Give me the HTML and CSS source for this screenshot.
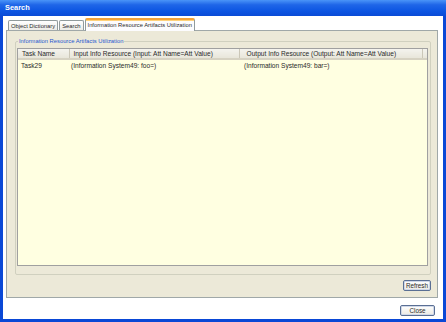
FILE: index.html
```html
<!DOCTYPE html>
<html lang="en">
<head>
  <meta charset="UTF-8">
  <title>Search</title>
  <link rel="stylesheet" href="styles.css">
</head>
<body>
  <!-- Title bar -->
  <div class="titlebar">Search</div>

  <!-- Client area -->
  <div class="client">
    <div class="tabs">
      <div class="tab">Object Dictionary</div>
      <div class="tab">Search</div>
      <div class="tab active">Information Resource Artifacts Utilization</div>
    </div>

    <div class="panel">
      <fieldset class="group">
        <legend>Information Resource Artifacts Utilization</legend>
        <div class="list">
          <table>
            <thead>
              <tr>
                <th class="col-task">Task Name</th>
                <th class="col-input">Input Info Resource (Input: Att Name=Att Value)</th>
                <th class="col-output">Output Info Resource (Output: Att Name=Att Value)</th>
                <th class="col-fill"></th>
              </tr>
            </thead>
            <tbody>
              <tr>
                <td>Task29</td>
                <td>(Information System49: foo=)</td>
                <td>(Information System49: bar=)</td>
                <td></td>
              </tr>
            </tbody>
          </table>
        </div>
      </fieldset>
      <div class="panel-actions">
        <button class="btn btn-refresh">Refresh</button>
      </div>
    </div>

    <div class="actions">
      <button class="btn btn-close">Close</button>
    </div>
  </div>
</body>
</html>
```

FILE: styles.css
```css
body {
  margin: 0;
  width: 446px;
  height: 322px;
  overflow: hidden;
  background: #0a48d6;
  font-family: 'Liberation Sans', Arial, sans-serif;
  color: #2a2a2a;
}

.titlebar {
  height: 16px;
  line-height: 16px;
  padding-left: 5px;
  font-size: 7.4px;
  font-weight: bold;
  color: #fff;
  background: linear-gradient(to bottom, #4a94f8 0%, #1f66e8 30%, #0c55e2 70%, #0a4bd6 100%);
}

.client {
  margin: 0 3px 3px;
  height: 303px;
  box-sizing: border-box;
  padding: 2px 5px 0 3px;
  background: #fff;
  display: flex;
  flex-direction: column;
}

/* Tabs */
.tabs {
  height: 12px;
  display: flex;
  align-items: flex-end;
  gap: 1px;
  padding-left: 2px;
  position: relative;
  z-index: 1;
}

.tab {
  height: 10px;
  line-height: 10px;
  padding: 0 2px;
  font-size: 5.8px;
  color: #2a2a2a;
  background: linear-gradient(to bottom, #ffffff, #ecebe6);
  border: 1px solid #919b9c;
  border-bottom: none;
  border-radius: 2px 2px 0 0;
  box-sizing: border-box;
}

.tab.active {
  height: 13px;
  margin-bottom: -1px;
  line-height: 11px;
  background: #fcfcfe;
  border-top: 2px solid #f5a43a;
  box-shadow: inset 0 1px 0 #ffd27a;
}

/* Tab page */
.panel {
  height: 268px;
  box-sizing: border-box;
  border: 1px solid #a0a8a8;
  background: #ece9d8;
  display: flex;
  flex-direction: column;
}

.group {
  margin: 7px 6px 0 8px;
  padding: 3px 2px 8px 1px;
  border: 1px solid #d0d0bf;
  border-radius: 2px;
  min-width: 0;
}

.group legend {
  margin-left: 1px;
  padding: 0 1px;
  font-size: 5.8px;
  line-height: 7px;
  color: #1f55d0;
}

.list {
  height: 218px;
  box-sizing: border-box;
  border: 1px solid #a0a0a0;
  background: #ffffe1;
  overflow: hidden;
}

table {
  width: 100%;
  border-collapse: collapse;
  table-layout: fixed;
  font-size: 6.6px;
}

th {
  height: 10px;
  padding: 0 0 0 4px;
  font-weight: normal;
  text-align: left;
  white-space: nowrap;
  background: linear-gradient(to bottom, #f4f3ee, #e8e6da);
  border-right: 1px solid #cbc7b8;
  border-bottom: 2px solid #d6d2c2;
  box-sizing: border-box;
}

th.col-task { width: 51px; }
th.col-input { width: 170px; }
th.col-output { width: 183px; padding-left: 7px; }
th.col-fill { border-right: none; }

td {
  height: 11px;
  padding: 0 0 0 3px;
  white-space: nowrap;
}

td:nth-child(2) { padding-left: 2px; }
td:nth-child(3) { padding-left: 5px; }

.panel-actions {
  display: flex;
  justify-content: flex-end;
  padding: 5px 6px 0 0;
}

.actions {
  display: flex;
  justify-content: flex-end;
  padding: 7px 3px 0 0;
}

.btn {
  height: 11px;
  padding: 0;
  font-family: 'Liberation Sans', Arial, sans-serif;
  font-size: 6.3px;
  color: #2a2a2a;
  background: linear-gradient(to bottom, #ffffff, #eceae2);
  border: 1px solid #5a6f94;
  border-radius: 2px;
  box-shadow: inset 0 0 0 1px #d0d8e8;
}

.btn-refresh { width: 28px; }
.btn-close { width: 35px; }
```
